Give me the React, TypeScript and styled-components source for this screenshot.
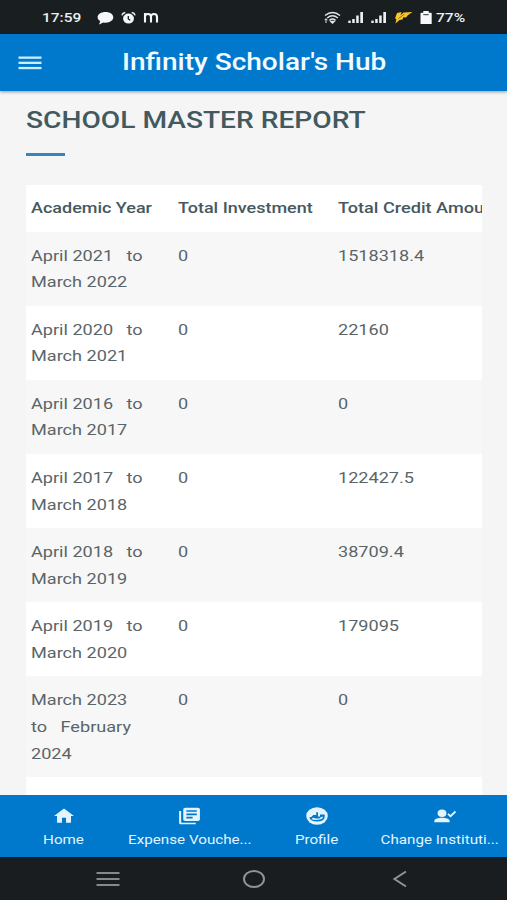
import React from 'react';
import styled, { createGlobalStyle } from 'styled-components';

const GlobalStyle = createGlobalStyle`
  html, body { margin: 0; padding: 0; overflow: hidden; }
  body { background: #f5f5f5; font-family: Roboto, "Liberation Sans", sans-serif; }
  *, *::before, *::after { box-sizing: border-box; }
`;

const Screen = styled.div`
  width: 507px;
  height: 900px;
  display: flex;
  flex-direction: column;
  overflow: hidden;
  background: #f5f5f5;
`;

/* Wide type: glyphs are expanded horizontally from the given origin. */
const Wide = styled.span<{ $origin?: string; $scale?: number }>`
  display: inline-block;
  white-space: pre;
  transform: scaleX(${p => p.$scale ?? 1.168});
  transform-origin: ${p => p.$origin ?? 'left'} center;
`;

const StatusBar = styled.header`
  flex: none;
  height: 34px;
  padding: 1px 41px 0 42px;
  display: flex;
  align-items: center;
  justify-content: space-between;
  background: #191e21;
  color: #eceff0;
  font-size: 13px;
  font-weight: 500;
`;

const StatusGroup = styled.div`
  display: flex;
  align-items: center;
`;

const Clock = styled.div`
  width: 55px;
  line-height: 16px;
`;

const Battery = styled.div`
  width: 30px;
  margin-left: 4px;
  line-height: 16px;
`;

const Glyph = styled.svg<{ $gap?: number }>`
  display: block;
  flex: none;
  margin-left: ${p => p.$gap ?? 0}px;
`;

const AppBar = styled.div`
  flex: none;
  position: relative;
  z-index: 1;
  height: 57px;
  display: grid;
  grid-template-columns: 60px 1fr 58px;
  align-items: center;
  background: #0078cb;
  box-shadow: 0 1px 3px rgba(0, 40, 70, 0.45);
  color: #f2fbff;
`;

const MenuButton = styled.button`
  border: 0;
  padding: 0 0 0 18px;
  background: none;
  line-height: 0;
`;

const AppTitle = styled.h1`
  margin: 0;
  padding-bottom: 2px;
  text-align: center;
  font-size: 24px;
  line-height: 32px;
  font-weight: 500;
`;

const Content = styled.main`
  flex: 1;
  min-height: 0;
  overflow: hidden;
  padding: 12.5px 25px 0 26px;
`;

const Heading = styled.h2`
  margin: 0;
  color: #41595f;
  font-size: 24px;
  line-height: 32px;
  font-weight: 500;
`;

const Accent = styled.div`
  width: 39px;
  height: 3px;
  margin: 17.5px 0 29.4px;
  background: #3586bd;
`;

const TableFrame = styled.div`
  overflow: hidden;
  font-size: 15.5px;
  line-height: 26.7px;
  color: #5a6568;
`;

const Row = styled.div<{ $head?: boolean; $white?: boolean }>`
  width: 600px;
  display: grid;
  grid-template-columns: 147px 160px 1fr;
  padding: ${p => (p.$head ? '10px 5px 9.7px' : '10.8px 5px 9.9px')};
  background: ${p => (p.$white ? '#ffffff' : '#f7f7f7')};
  font-weight: ${p => (p.$head ? 500 : 400)};
  color: ${p => (p.$head ? '#46595f' : 'inherit')};
`;

const Line = styled.div``;

const BottomNav = styled.nav`
  flex: none;
  height: 62px;
  display: grid;
  grid-template-columns: 127px 125px 130px 125px;
  background: #0078cb;
  color: #e3f4ff;
  font-size: 13px;
  line-height: 16px;
`;

const NavItem = styled.a`
  min-width: 0;
  display: flex;
  flex-direction: column;
  align-items: center;
  padding-top: 11px;
  gap: 6px;
`;

const NavLabel = styled.div<{ $trail: number }>`
  padding-right: ${p => p.$trail}px;
`;

const SystemBar = styled.footer`
  flex: none;
  height: 43px;
  display: grid;
  grid-template-columns: 215px 78px 214px;
  align-items: center;
  justify-items: center;
  background: #191d20;
`;

const SystemKey = styled.div`
  line-height: 0;
`;

const rows: { year: string[]; investment: string; credit: string }[] = [
  { year: ['April 2021   to', 'March 2022'], investment: '0', credit: '1518318.4' },
  { year: ['April 2020   to', 'March 2021'], investment: '0', credit: '22160' },
  { year: ['April 2016   to', 'March 2017'], investment: '0', credit: '0' },
  { year: ['April 2017   to', 'March 2018'], investment: '0', credit: '122427.5' },
  { year: ['April 2018   to', 'March 2019'], investment: '0', credit: '38709.4' },
  { year: ['April 2019   to', 'March 2020'], investment: '0', credit: '179095' },
  { year: ['March 2023', 'to   February', '2024'], investment: '0', credit: '0' },
  { year: ['March 2022'], investment: '', credit: '' },
];

const Signal = ({ gap }: { gap: number }) => (
  <Glyph $gap={gap} width="16" height="13" viewBox="0 0 16 13" fill="#eceff0">
    <rect x="0.3" y="9.6" width="2.4" height="2.4" />
    <rect x="4.2" y="8" width="2.5" height="4" />
    <rect x="8.2" y="4.5" width="2.5" height="7.5" />
    <rect x="12.3" y="1" width="2.7" height="11" />
  </Glyph>
);

const HomeIcon = () => (
  <Glyph width="24" height="20" viewBox="0 0 24 24" preserveAspectRatio="none" fill="currentColor">
    <path d="M10 20v-6h4v6h5v-8h3L12 3 2 12h3v8z" />
  </Glyph>
);

const VoucherIcon = () => (
  <Glyph width="25" height="20" viewBox="0 0 24 24" preserveAspectRatio="none" fill="currentColor">
    <path d="M4 6H2v14c0 1.1.9 2 2 2h14v-2H4V6zM20 2H8c-1.1 0-2 .9-2 2v12c0 1.1.9 2 2 2h12c1.1 0 2-.9 2-2V4c0-1.1-.9-2-2-2zm-1 9H9V9h10v2zm-4 4H9v-2h6v2zm4-8H9V5h10v2z" />
  </Glyph>
);

const ProfileIcon = () => (
  <Glyph width="26" height="20" viewBox="0 0 26 20">
    <ellipse cx="13" cy="10" rx="10.8" ry="8.7" fill="currentColor" />
    <path
      d="M5.3 11.5Q8 11 9.2 9L12.2 9 12.2 6.3 14 6.3 14 10.5 16 10.5 16 8.5 20.8 8.5Q21.5 15.5 13.5 15.5 6.5 15.5 5.3 11.5Z"
      fill="#0078cb"
    />
    <path d="M7.5 13.2Q9.5 10.8 11.2 12.6L15.5 12.6Q16.5 10.3 19.2 10.8 18.6 13.2 15.8 13.6 11 14.6 7.5 13.2Z" fill="currentColor" />
  </Glyph>
);

const InstitutionIcon = () => (
  <Glyph width="26" height="20" viewBox="0 0 26 20">
    <g fill="currentColor">
      <ellipse cx="10" cy="7.3" rx="4.4" ry="3.7" />
      <path d="M2.3 16.3v-1.4c0-2.2 4-3.2 7.7-3.2s7.7 1 7.7 3.2v1.4z" />
    </g>
    <path d="m16 7.9 2.5 2.2 5-4.6" fill="none" stroke="currentColor" strokeWidth="1.9" />
  </Glyph>
);

const tabs = [
  { label: 'Home', Icon: HomeIcon, trail: 0 },
  { label: 'Expense Vouche...', Icon: VoucherIcon, trail: 0 },
  { label: 'Profile', Icon: ProfileIcon, trail: 0 },
  { label: 'Change Instituti...', Icon: InstitutionIcon, trail: 9 },
];

export default function App() {
  return (
    <Screen>
      <GlobalStyle />
      <StatusBar>
        <StatusGroup>
          <Clock><Wide $scale={1.19}>17:59</Wide></Clock>
          <Glyph width="17" height="14" viewBox="0 0 17 14" fill="#f5f7f8">
            <path d="M8.500 1C13 1 16.300 3.200 16.300 6.300s-3.300 5.400-7.800 5.400c-.8 0-1.500-.1-2.200-.2L2 13.400l1.200-3.200C1.700 9.200.6 7.900.6 6.300.6 3.200 4 1 8.500 1Z" />
          </Glyph>
          <Glyph $gap={7} width="15" height="14" viewBox="0 0 15 14">
            <ellipse cx="7.5" cy="7.6" rx="5.4" ry="5" fill="#f5f7f8" />
            <path d="M1 4.3Q1.5 1.8 4.3 1.4M10.7 1.4Q13.5 1.8 14 4.3" fill="none" stroke="#e8ebec" strokeWidth="1.5" />
            <path d="M7.3 5v3l2 1.2" fill="none" stroke="#191e21" strokeWidth="1.3" />
          </Glyph>
          <Glyph $gap={7} width="16" height="12" viewBox="0 0 16 12" fill="none" stroke="#f5f7f8" strokeWidth="2.1">
            <path d="M2 10.500V1M2 5Q2 2 5 2Q8 2 8 5V10.500M8 5Q8 2 11 2Q14 2 14 5V10.500" />
          </Glyph>
        </StatusGroup>
        <StatusGroup>
          <Glyph width="17" height="13" viewBox="0 0 17 13" fill="none" stroke="#e4e7e8" strokeWidth="1.5">
            <path d="M1 4.5Q8.5-1.5 16 4.5M3.2 7Q8.5 2.5 13.8 7M5.5 9.3Q8.5 6.8 11.5 9.3" />
            <path d="m7 10.5 1.5 1.5 1.5-1.5Z" fill="#e4e7e8" />
            <path d="M2 12V8M.6 9.2 2 7.6l1.4 1.6" strokeWidth="1" />
          </Glyph>
          <Signal gap={7} />
          <Signal gap={7} />
          <Glyph $gap={7} width="19" height="13" viewBox="0 0 19 13" fill="#f7c52d">
            <path d="M3 2 7.5 1 6.5 4.3 9.5 1.5 18.5 1Q14 3.5 12 6.5L9.3 6.2 8.5 8.5 5.5 9 1.5 12.5 2.4 8 1 7.5Z" />
            <path d="M4.5 7.5 10.5 3" stroke="#836c23" strokeWidth="0.9" />
          </Glyph>
          <Glyph $gap={7} width="12" height="15" viewBox="0 0 12 15" fill="#f5f7f8">
            <path d="M3.3 1h5.400v1.700H11q.7 0 .7.7v10q0 .7-.7.7H1.200q-.7 0-.7-.7v-10q0-.7.7-.7h2.100Z" />
            <path d="M3.3 4.7h5.400" stroke="#191e21" strokeWidth="0.9" />
          </Glyph>
          <Battery><Wide $scale={1.2}>77%</Wide></Battery>
        </StatusGroup>
      </StatusBar>

      <AppBar>
        <MenuButton aria-label="Menu">
          <Glyph width="24" height="14" viewBox="0 0 24 14" fill="#c9eeff">
            <rect x="0.5" y="0.5" width="23" height="2.3" />
            <rect x="0.5" y="5.7" width="23" height="2.3" />
            <rect x="0.5" y="10.9" width="23" height="2.3" />
          </Glyph>
        </MenuButton>
        <AppTitle><Wide $origin="center">Infinity Scholar's Hub</Wide></AppTitle>
      </AppBar>

      <Content>
        <Heading><Wide $scale={1.173}>SCHOOL MASTER REPORT</Wide></Heading>
        <Accent />
        <TableFrame>
          <Row $head $white>
            <Wide $scale={1.16}>Academic Year</Wide>
            <Wide $scale={1.16}>Total Investment</Wide>
            <Wide $scale={1.168}>Total Credit Amou</Wide>
          </Row>
          {rows.map((row, i) => (
            <Row key={row.year.join()} $white={i % 2 === 1}>
              <div>
                {row.year.map(line => (
                  <Line key={line}><Wide>{line}</Wide></Line>
                ))}
              </div>
              <div><Wide>{row.investment}</Wide></div>
              <div><Wide>{row.credit}</Wide></div>
            </Row>
          ))}
        </TableFrame>
      </Content>

      <BottomNav>
        {tabs.map(({ label, Icon, trail }) => (
          <NavItem key={label}>
            <Icon />
            <NavLabel $trail={trail}><Wide $origin="center">{label}</Wide></NavLabel>
          </NavItem>
        ))}
      </BottomNav>

      <SystemBar>
        <SystemKey>
          <Glyph width="24" height="16" viewBox="0 0 24 16" fill="#85898b">
            <rect x="0.5" y="1" width="23" height="2" />
            <rect x="0.5" y="7" width="23" height="2" />
            <rect x="0.5" y="13" width="23" height="2" />
          </Glyph>
        </SystemKey>
        <SystemKey>
          <Glyph width="24" height="20" viewBox="0 0 24 20" fill="none" stroke="#909496" strokeWidth="2">
            <ellipse cx="12" cy="10" rx="10" ry="8" />
          </Glyph>
        </SystemKey>
        <SystemKey>
          <Glyph width="16" height="18" viewBox="0 0 16 18" fill="none" stroke="#909496" strokeWidth="2">
            <path d="M14 1.500 2.500 9 14 16.500" />
          </Glyph>
        </SystemKey>
      </SystemBar>
    </Screen>
  );
}
